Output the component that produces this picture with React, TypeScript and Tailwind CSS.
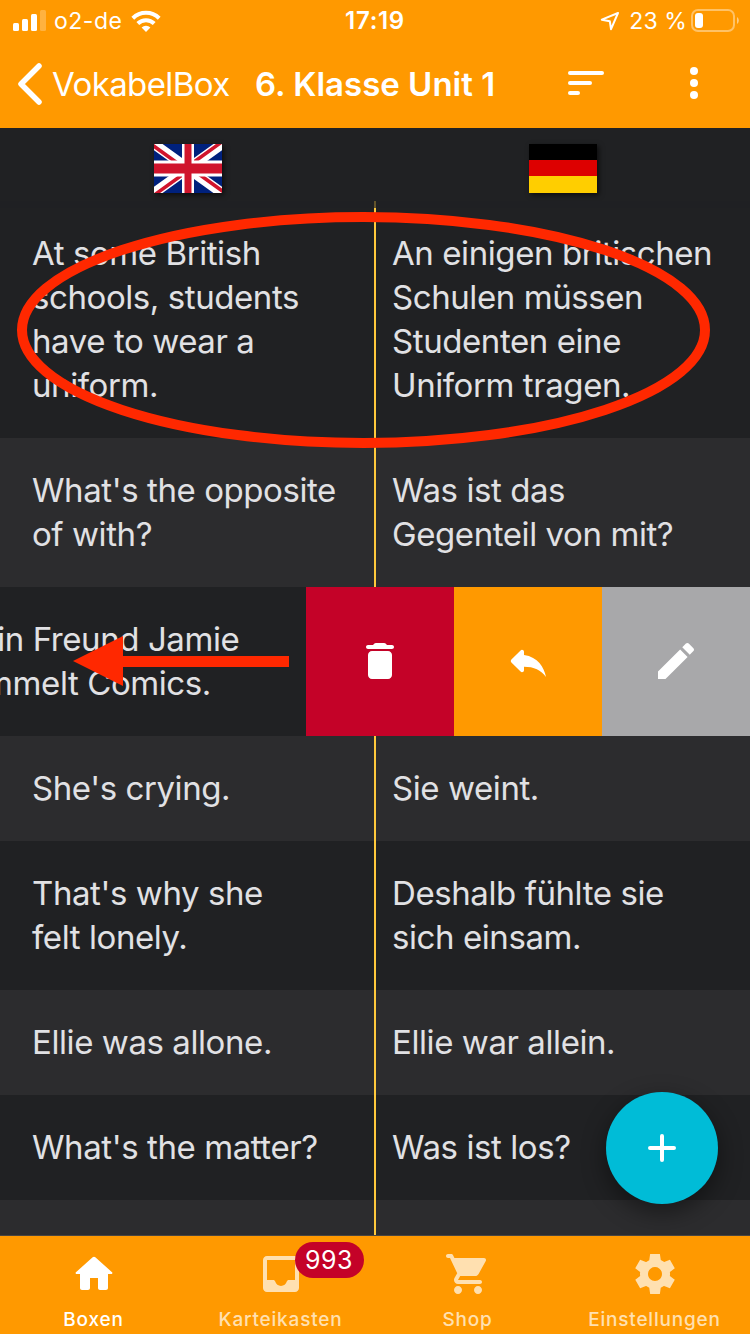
import type { ReactNode } from 'react'

interface Card { front: string[]; back: string[] }

const cards: Card[] = [
  {
    front: ['At some British', 'schools, students', 'have to wear a', 'uniform.'],
    back: ['An einigen britischen', 'Schulen müssen', 'Studenten eine', 'Uniform tragen.'],
  },
  { front: ["What's the opposite", 'of with?'], back: ['Was ist das', 'Gegenteil von mit?'] },
  { front: [], back: ['Mein Freund Jamie', 'sammelt Comics.'] },
  { front: ["She's crying."], back: ['Sie weint.'] },
  { front: ["That's why she", 'felt lonely.'], back: ['Deshalb fühlte sie', 'sich einsam.'] },
  { front: ['Ellie was allone.'], back: ['Ellie war allein.'] },
  { front: ["What's the matter?"], back: ['Was ist los?'] },
]

const SWIPED = 2

const icons = {
  trash:
    'M6 19c0 1.1.9 2 2 2h8c1.1 0 2-.9 2-2V9c0-1.1-.9-2-2-2H8c-1.1 0-2 .9-2 2v10zM18 4h-2.5l-.71-.71c-.18-.18-.44-.29-.7-.29H9.91c-.26 0-.52.11-.7.29L8.5 4H6c-.55 0-1 .45-1 1s.45 1 1 1h12c.55 0 1-.45 1-1s-.45-1-1-1z',
  reply:
    'M10 9V7.41c0-.89-1.08-1.34-1.71-.71L3.7 11.29c-.39.39-.39 1.02 0 1.41l4.59 4.59c.63.63 1.71.19 1.71-.7V14.9c5 0 8.5 1.6 11 5.1-1-5-4-10-11-11z',
  edit:
    'M3 17.25V21h3.75L17.81 9.94l-3.75-3.75L3 17.25zM20.71 7.04c.39-.39.39-1.02 0-1.41l-2.34-2.34c-.39-.39-1.02-.39-1.41 0l-1.83 1.83 3.75 3.75 1.83-1.83z',
  home:
    'M10 19v-5h4v5c0 .55.45 1 1 1h3c.55 0 1-.45 1-1v-7h1.7c.46 0 .68-.57.33-.87L12.67 3.6c-.38-.34-.96-.34-1.34 0l-8.36 7.53c-.34.3-.13.87.33.87H5v7c0 .55.45 1 1 1h3c.55 0 1-.45 1-1z',
  inbox:
    'M19 3H5c-1.1 0-2 .9-2 2v14c0 1.1.9 2 2 2h14c1.1 0 2-.9 2-2V5c0-1.1-.9-2-2-2zm0 12h-3.13c-.47 0-.85.34-.98.8-.35 1.27-1.52 2.2-2.89 2.2s-2.54-.93-2.89-2.2c-.13-.46-.51-.8-.98-.8H5V5h14v10z',
  cart:
    'M7 18c-1.1 0-1.99.9-1.99 2S5.9 22 7 22s2-.9 2-2-.9-2-2-2zM1 3c0 .55.45 1 1 1h1l3.6 7.59-1.35 2.44C4.52 15.37 5.48 17 7 17h11c.55 0 1-.45 1-1s-.45-1-1-1H7l1.1-2h7.45c.75 0 1.41-.41 1.75-1.03l3.58-6.49c.37-.66-.11-1.48-.87-1.48H5.21l-.67-1.43c-.16-.35-.52-.57-.9-.57H2c-.55 0-1 .45-1 1zm16 15c-1.1 0-1.99.9-1.99 2s.89 2 1.99 2 2-.9 2-2-.9-2-2-2z',
  settings:
    'M19.44 12.99l-.01.02c.04-.33.08-.67.08-1.01 0-.34-.03-.66-.07-.99l.01.02 2.44-1.92-2.43-4.22-2.87 1.16.01.01c-.52-.4-1.09-.74-1.71-1h.01L14.44 2H9.57l-.44 3.07h.01c-.62.26-1.19.6-1.71 1l.01-.01-2.88-1.17-2.44 4.22 2.44 1.92.01-.02c-.04.33-.07.65-.07.99 0 .34.03.68.08 1.01l-.01-.02-2.1 1.65-.33.26 2.43 4.2 2.88-1.15-.02-.04c.53.41 1.1.75 1.73 1.01h-.03L9.58 22h4.85s.03-.18.06-.42l.38-2.65h-.01c.62-.26 1.2-.6 1.73-1.01l-.02.04 2.88 1.15 2.43-4.2s-.14-.12-.33-.26l-2.11-1.66zM12 15.5c-1.93 0-3.5-1.57-3.5-3.5s1.57-3.5 3.5-3.5 3.5 1.57 3.5 3.5-1.57 3.5-3.5 3.5z',
}

function Icon({ name }: { name: keyof typeof icons }) {
  return (
    <svg viewBox="0 0 24 24" className="block size-12 shrink-0" fill="currentColor">
      <path d={icons[name]} />
    </svg>
  )
}

function StatusBar() {
  return (
    <div className="grid h-10 grid-cols-[1fr_auto_1fr] items-center pr-[11px] pl-[13px] text-[23px] leading-10">
      <div className="flex items-center">
        <svg viewBox="0 0 33 21" className="h-[21px] w-[33px]" fill="currentColor">
          <rect x="0" y="13" width="6" height="8" rx="1.5" />
          <rect x="9" y="9" width="6" height="12" rx="1.5" />
          <rect x="18" y="4" width="6" height="17" rx="1.5" />
          <rect x="27" y="0" width="6" height="21" rx="1.5" opacity="0.25" />
        </svg>
        <span className="ml-2 w-[77px] pt-px whitespace-nowrap tracking-[0.5px]">o2-de</span>
        <svg viewBox="0 0 30 22" className="h-[22px] w-[30px]" fill="none" stroke="currentColor" strokeWidth="4">
          <path d="M1.8 8.2a19 19 0 0 1 26.4 0" />
          <path d="M6.8 13.5a11.8 11.8 0 0 1 16.4 0" />
          <path d="M15 22l-4.4-4.6a6.4 6.4 0 0 1 8.8 0z" fill="currentColor" stroke="none" />
        </svg>
      </div>
      <span className="-ml-[2px] pt-px text-[24px] font-semibold tracking-[0.7px]">17:19</span>
      <div className="flex items-center justify-end">
        <svg viewBox="0 0 20 20" className="mr-[9px] h-5 w-5" fill="none" stroke="currentColor" strokeWidth="2" strokeLinejoin="round">
          <path d="M18 2L1.8 8.7l8 1.5 1.2 8z" />
        </svg>
        <span className="pt-px whitespace-nowrap tracking-[0.1px]">23 %</span>
        <svg viewBox="0 0 48 23" className="ml-1 h-[23px] w-12">
          <rect x="1" y="1" width="42" height="21" rx="6" fill="none" stroke="#fff" strokeWidth="2" opacity="0.4" />
          <rect x="4" y="4" width="8" height="15" rx="3" fill="#fff" />
          <path d="M46 8c2.4 1.5 2.4 5.5 0 7z" fill="#fff" opacity="0.5" />
        </svg>
      </div>
    </div>
  )
}

function NavBar() {
  return (
    <div className="flex h-[88px] items-center">
      <svg viewBox="0 0 26 44" className="ml-[17px] h-11 w-[26px]" fill="none" stroke="currentColor" strokeWidth="5.5" strokeLinecap="round" strokeLinejoin="round">
        <path d="M22 4L4 22l18 18" />
      </svg>
      <span className="ml-[9px] w-[203px] pt-[2px] text-[33px] tracking-[-0.6px] whitespace-nowrap">VokabelBox</span>
      <h1 className="w-[313px] pt-[2px] text-[33px] font-semibold whitespace-nowrap">6. Klasse Unit 1</h1>
      <svg viewBox="0 0 36 24" className="-mt-[2px] h-6 w-9" fill="currentColor">
        <rect width="36" height="4" rx="2" />
        <rect y="10" width="24" height="4" rx="2" />
        <rect y="20" width="12" height="4" rx="2" />
      </svg>
      <svg viewBox="0 0 8 32" className="-mt-[2px] ml-[86px] h-8 w-2" fill="currentColor">
        <circle cx="4" cy="4" r="4" />
        <circle cx="4" cy="16" r="4" />
        <circle cx="4" cy="28" r="4" />
      </svg>
    </div>
  )
}

function Flags() {
  return (
    <div className="grid h-[73px] grid-cols-2 justify-items-center pt-4">
      <svg viewBox="0 0 68 49" className="ml-px h-[49px] w-[68px] shadow-[2px_2px_5px_rgba(0,0,0,0.6)]">
        <path fill="#00217d" d="M0 0h68v49H0z" />
        <path stroke="#fff" strokeWidth="10" d="M0 0l68 49M68 0L0 49" />
        <path stroke="#d0142c" strokeWidth="3.5" d="M-1 1.5L33 26M35 23L69 47.5M67 -1.5L33 23M35 26L1 50.5" />
        <path stroke="#fff" strokeWidth="16" d="M0 24.5h68" />
        <path stroke="#fff" strokeWidth="12" d="M34 0v49" />
        <path stroke="#d0142c" strokeWidth="10" d="M0 24.5h68" />
        <path stroke="#d0142c" strokeWidth="7" d="M34 0v49" />
      </svg>
      <svg viewBox="0 0 68 49" className="ml-px h-[49px] w-[68px] shadow-[2px_2px_5px_rgba(0,0,0,0.6)]">
        <path fill="#000" d="M0 0h68v16H0z" />
        <path fill="#dd0000" d="M0 16h68v16H0z" />
        <path fill="#ffce00" d="M0 32h68v17H0z" />
      </svg>
    </div>
  )
}

function Lines({ lines }: { lines: string[] }) {
  return (
    <>
      {lines.map((line) => (
        <p key={line} className="whitespace-nowrap">{line}</p>
      ))}
    </>
  )
}

function Action({ className, children }: { className: string; children: ReactNode }) {
  return <button className={`flex w-[148px] items-center justify-center pb-px text-white ${className}`}>{children}</button>
}

function SwipedRow({ card }: { card: Card }) {
  return (
    <div className="flex bg-[#202123]">
      <div className="w-[306px] overflow-hidden pt-[30px] pb-[31px]">
        <div className="-ml-[51px]">
          <Lines lines={card.back} />
        </div>
      </div>
      <Action className="bg-[#c40228]"><Icon name="trash" /></Action>
      <Action className="bg-[#ff9900]"><Icon name="reply" /></Action>
      <Action className="bg-[#a8a8aa]"><Icon name="edit" /></Action>
    </div>
  )
}

function Row({ card, light }: { card: Card; light: boolean }) {
  return (
    <div className={`grid grid-cols-2 ${light ? 'bg-[#2c2c2e]' : 'bg-[#202123]'}`}>
      <div className="border-r border-[#ffc93c] pt-[30px] pb-[31px] pl-8">
        <Lines lines={card.front} />
      </div>
      <div className="border-l border-[#ffc93c] pt-[30px] pb-[31px] pl-4">
        <Lines lines={card.back} />
      </div>
    </div>
  )
}

function Tab({ icon, label, active, badge }: { icon: keyof typeof icons; label: string; active?: boolean; badge?: string }) {
  return (
    <div className={`flex flex-col items-center pt-[14px] ${active ? 'text-white' : 'text-[#ffe0b0]'}`}>
      <div className="relative">
        <Icon name={icon} />
        {badge && (
          <span className="absolute -top-2 left-[38px] flex h-9 w-[69px] items-center justify-center rounded-full bg-[#c40228] pt-px text-[25px] tracking-[0.6px] text-white">
            {badge}
          </span>
        )}
      </div>
      <span className="mt-[10px] text-[19px] leading-6 font-medium tracking-[0.8px] whitespace-nowrap">{label}</span>
    </div>
  )
}

/* Red tutorial markers drawn over the list */
function Annotations() {
  return (
    <svg viewBox="0 0 750 1334" className="pointer-events-none absolute inset-0 h-[1334px] w-[750px]">
      <ellipse cx="363.5" cy="330" rx="341.5" ry="113" fill="none" stroke="#ff2800" strokeWidth="10" />
      <path d="M73 661l50-25v20h166v11H123v19z" fill="#ff2800" />
    </svg>
  )
}

export default function App() {
  return (
    <div className="relative flex h-[1334px] w-[750px] flex-col overflow-hidden bg-[#202123] font-['Inter',sans-serif]">
      <header className="h-32 shrink-0 bg-[#ff9900] text-white">
        <StatusBar />
        <NavBar />
      </header>

      <Flags />

      <main className="relative flex min-h-0 flex-1 flex-col overflow-hidden text-[33px] leading-[44px] tracking-[-0.42px] text-[#e1e1e4]">
        {cards.map((card, i) =>
          i === SWIPED ? <SwipedRow key={i} card={card} /> : <Row key={i} card={card} light={i % 2 === 1} />,
        )}
        <Row card={{ front: [], back: [] }} light />
        {/* header shade over the top of the divider */}
        <div className="absolute inset-x-0 top-0 h-[7px] bg-[#202123]/70" />
      </main>

      <nav className="grid h-[99px] shrink-0 grid-cols-4 border-t border-[#4a4540] bg-[#ff9900] pr-[2px]">
        <Tab icon="home" label="Boxen" active />
        <Tab icon="inbox" label="Karteikasten" badge="993" />
        <Tab icon="cart" label="Shop" />
        <Tab icon="settings" label="Einstellungen" />
      </nav>

      <button className="absolute top-[1092px] left-[606px] flex size-28 items-center justify-center rounded-full bg-[#00bcd7] shadow-[0_8px_24px_rgba(0,0,0,0.45)]">
        <svg viewBox="0 0 28 28" className="size-7" stroke="#fff" strokeWidth="4" strokeLinecap="round">
          <path d="M14 2v24M2 14h24" />
        </svg>
      </button>

      <Annotations />
    </div>
  )
}
